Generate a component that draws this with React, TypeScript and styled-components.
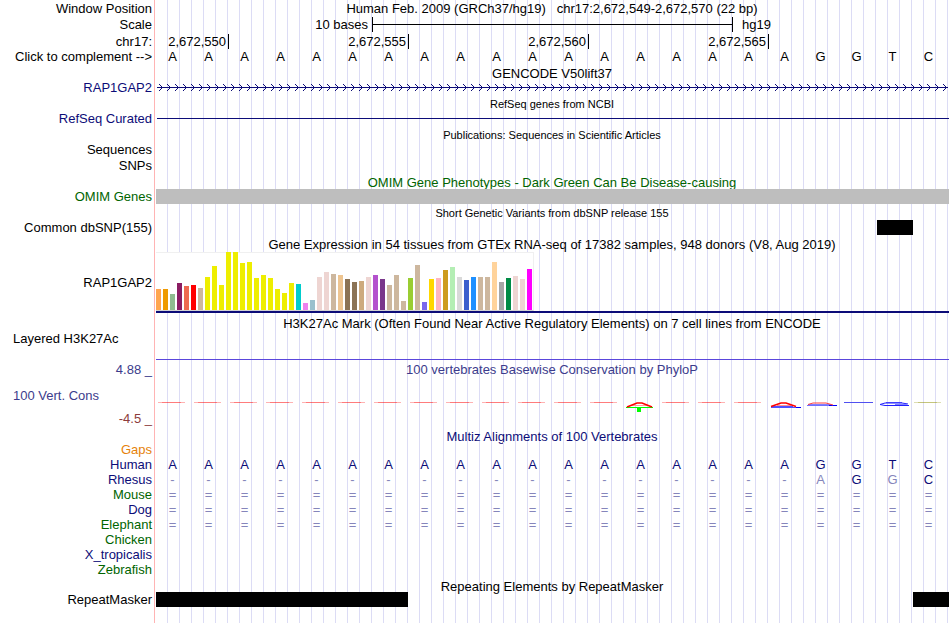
import React from 'react';
import styled, { createGlobalStyle } from 'styled-components';

const NAVY = '#0c0c78';
const GREEN = '#006400';
const SLATE = '#3c3c8c';

const GlobalStyle = createGlobalStyle`
  body {
    margin: 0;
    background: #fff;
    color: #000;
    font: 13px/15px "Liberation Sans", Arial, Helvetica, sans-serif;
  }
`;

const Browser = styled.main`
  padding-right: 1px;
  overflow: hidden;
`;

const Row = styled.section<{ $h: number }>`
  display: grid;
  grid-template-columns: 155px minmax(0, 1fr);
  column-gap: 1px;
  height: ${(p) => p.$h}px;
`;

const Label = styled.div<{ $color?: string; $align?: string; $left?: boolean }>`
  display: flex;
  box-sizing: border-box;
  align-items: ${(p) => p.$align ?? 'center'};
  justify-content: ${(p) => (p.$left ? 'flex-start' : 'flex-end')};
  padding: 0 2px 0 13px;
  border-right: 1px solid #ffb4b4;
  color: ${(p) => p.$color ?? '#000'};
  white-space: nowrap;
`;

const ComplementButton = styled.button`
  padding: 0;
  border: 0;
  background: none;
  color: inherit;
  font: inherit;
  cursor: pointer;
`;

const Plot = styled.div`
  display: grid;
  grid-template-columns: minmax(0, 1fr);
  padding-right: 1px;
  background-image: linear-gradient(to left, #dcdcf5 1px, transparent 1px);
  background-size: calc(100% / 66) 100%;
  background-origin: content-box;
`;

const Title = styled.h2<{ $color?: string; $small?: boolean; $lowered?: boolean }>`
  align-self: center;
  margin: 0;
  padding-top: ${(p) => (p.$lowered ? 2 : 0)}px;
  color: ${(p) => p.$color ?? '#000'};
  font-size: ${(p) => (p.$small ? 11 : 13)}px;
  font-weight: 400;
  text-align: center;
  white-space: pre;
`;

const ScaleBar = styled.div`
  display: grid;
  grid-template-columns: 6fr 10fr 6fr;
  align-items: center;
`;

const ScaleText = styled.span<{ $end?: boolean }>`
  padding: ${(p) => (p.$end ? '0 4px 0 0' : '0 0 0 10px')};
  text-align: ${(p) => (p.$end ? 'right' : 'left')};
`;

const ScaleLine = styled.div`
  display: flex;
  align-items: center;
  height: 15px;
  margin-right: -1px;
  border: solid #000;
  border-width: 0 1px;

  &::before {
    content: '';
    flex: 1;
    height: 1px;
    background: #000;
  }
`;

const Ruler = styled.div`
  display: grid;
  grid-template-columns: 2fr 5fr 5fr 5fr 5fr;
  margin: 1px -1px 0 1px;
`;

const Tick = styled.span`
  box-sizing: border-box;
  height: 15px;
  padding: 1px 2px 0 0;
  border-right: 1px solid #000;
  line-height: 14px;
  text-align: right;
`;

const Bases = styled.div`
  display: grid;
  grid-template-columns: repeat(22, 1fr);
  align-items: end;
`;

const Base = styled.span<{ $color?: string }>`
  padding-right: 3px;
  color: ${(p) => p.$color ?? '#000'};
  line-height: 14px;
  text-align: center;
`;

const Features = styled.div`
  display: grid;
  grid-template-columns: repeat(22, 1fr);
  margin-right: -1px;
`;

const Feature = styled.div<{ $from: number; $to: number; $color?: string }>`
  grid-column: ${(p) => p.$from} / ${(p) => p.$to};
  background: ${(p) => p.$color ?? '#000'};
`;

const Line = styled.div<{ $color: string; $align?: string; $inset?: boolean }>`
  align-self: ${(p) => p.$align ?? 'center'};
  height: 1px;
  margin: 0 -1px 0 ${(p) => (p.$inset ? 1 : 0)}px;
  background: ${(p) => p.$color};
`;

const Strand = styled.svg`
  display: block;
  width: 100%;
  height: 15px;
  overflow: hidden;
`;

const Expression = styled.div`
  display: flex;
  margin-right: -1px;
  border-bottom: 2px solid ${NAVY};
`;

const Bars = styled.div`
  display: flex;
  box-sizing: border-box;
  align-items: flex-end;
  gap: 2px;
  padding-right: 1px;
  border: solid #f0f0f0;
  border-width: 0 1px 1px 0;
  border-bottom-color: #d2d2d2;
  background: linear-gradient(#f0f0f0 1px, #fff 1px);
`;

const Bar = styled.div<{ $h: number; $color: string }>`
  width: 5px;
  height: ${(p) => p.$h}px;
  background: ${(p) => p.$color};
`;

const Logos = styled.div`
  display: grid;
  grid-template-columns: repeat(22, 1fr);
  align-items: start;
  padding-top: 22px;
`;

const Logo = styled.svg`
  display: block;
  width: 100%;
  height: 12px;
  overflow: visible;
`;

const TISSUES: [number, string][] = [
  [21, '#ffa54f'], [21, '#ee9a00'], [16, '#8fbc8f'], [27, '#8b1c62'], [24, '#ee6a50'],
  [25, '#ff0000'], [22, '#cdb79e'], [33, '#eeee00'], [44, '#eeee00'], [25, '#eeee00'],
  [58, '#eeee00'], [58, '#eeee00'], [47, '#eeee00'], [48, '#eeee00'], [32, '#eeee00'],
  [35, '#eeee00'], [32, '#eeee00'], [21, '#eeee00'], [17, '#eeee00'], [27, '#eeee00'],
  [26, '#00cdcd'], [7, '#ee82ee'], [10, '#9ac0cd'], [33, '#eed5d2'], [38, '#eed5d2'],
  [36, '#cdb79e'], [35, '#eec591'], [31, '#8b7355'], [28, '#8b7355'], [29, '#cdaa7d'],
  [33, '#eed5d2'], [35, '#b452cd'], [31, '#7a378b'], [25, '#cdb79e'], [35, '#cdb79e'],
  [9, '#cdb79e'], [32, '#9acd32'], [45, '#cdb79e'], [8, '#7a67ee'], [31, '#ffd700'],
  [32, '#ffb6c1'], [40, '#cd9b1d'], [43, '#b4eeb4'], [33, '#d9d9d9'], [30, '#3a5fcd'],
  [33, '#1e90ff'], [33, '#cdb79e'], [33, '#cdb79e'], [48, '#ffd39b'], [28, '#a6a6a6'],
  [32, '#008b45'], [34, '#eed5d2'], [31, '#eed5d2'], [41, '#ff00ff'],
];

const HUMAN = 'AAAAAAAAAAAAAAAAAAGGTC';
const SPECIES: { name: string; color: string; seq?: string }[] = [
  { name: 'Gaps', color: '#e6820a' },
  { name: 'Human', color: NAVY, seq: HUMAN },
  { name: 'Rhesus', color: NAVY, seq: '------------------AGGC' },
  { name: 'Mouse', color: GREEN, seq: '='.repeat(22) },
  { name: 'Dog', color: NAVY, seq: '='.repeat(22) },
  { name: 'Elephant', color: GREEN, seq: '='.repeat(22) },
  { name: 'Chicken', color: GREEN },
  { name: 'X_tropicalis', color: NAVY },
  { name: 'Zebrafish', color: GREEN },
];

function Sequence({ seq, reference }: { seq: string; reference?: string }) {
  return (
    <Bases>
      {[...seq].map((c, i) => (
        <Base key={i} $color={reference ? (c === reference[i] ? NAVY : '#8585bb') : undefined}>
          {c}
        </Base>
      ))}
    </Bases>
  );
}

function TitleRow({ h, color, small, children }: {
  h: number; color?: string; small?: boolean; children: string;
}) {
  return (
    <Row $h={h}>
      <Label />
      <Plot><Title $color={color} $small={small} $lowered>{children}</Title></Plot>
    </Row>
  );
}

function Dash({ color }: { color: string }) {
  return (
    <>
      <path d="M2 2.5H29" stroke={color} strokeOpacity=".3" />
      <path d="M6 2.5H25" stroke={color} strokeOpacity=".3" />
    </>
  );
}

function ConservationLogo({ index }: { index: number }) {
  let drawing = <Dash color="#ff0000" />;
  if (index === 13) {
    drawing = (
      <>
        <path d="M2 7.5H29" stroke="#00ff00" />
        <path d="M7 5.5H25" stroke="#ffa0a0" />
        <path d="M3 7L13 3H18L28 7" fill="none" stroke="#ff0000" strokeWidth="1.6" />
        <path d="M13 7H17V12H13Z" fill="#00ff00" />
      </>
    );
  } else if (index === 17) {
    drawing = (
      <>
        <path d="M3 6.5H25M3 7.5H32" stroke="#5050ff" />
        <path d="M28 7.5H33" stroke="#0000ff" />
        <path d="M9 5.5H23" stroke="#ff9090" />
        <path d="M3 6.5L13 3H18L28 6.5" fill="none" stroke="#ff0000" strokeWidth="1.6" />
      </>
    );
  } else if (index === 18) {
    drawing = (
      <>
        <path d="M4 4.5H27" stroke="#8080ff" />
        <path d="M3 5.5H32" stroke="#7070ff" />
        <path d="M25 5.5H33" stroke="#0000ff" />
        <path d="M4 4.5L9 3H22L29 5" fill="none" stroke="#ff4040" />
      </>
    );
  } else if (index === 19) {
    drawing = <path d="M4 2.5H33" stroke="#5050f0" />;
  } else if (index === 20) {
    drawing = (
      <>
        <path d="M10 2.5H26" stroke="#6060ff" />
        <path d="M32 4L26 3H9L4 4.5L9 5.5H33" fill="none" stroke="#2020ff" />
        <path d="M19 4.5H31" stroke="#8080ff" />
      </>
    );
  } else if (index === 21) {
    drawing = <Dash color="#909000" />;
  }
  return <Logo aria-hidden="true">{drawing}</Logo>;
}

export default function App() {
  return (
    <>
      <GlobalStyle />
      <Browser>
        <Row $h={16}>
          <Label>Window Position</Label>
          <Plot>
            <Title>{'Human Feb. 2009 (GRCh37/hg19)   chr17:2,672,549-2,672,570 (22 bp)'}</Title>
          </Plot>
        </Row>
        <Row $h={17}>
          <Label>Scale</Label>
          <Plot>
            <ScaleBar>
              <ScaleText $end>10 bases</ScaleText>
              <ScaleLine />
              <ScaleText>hg19</ScaleText>
            </ScaleBar>
          </Plot>
        </Row>
        <Row $h={16}>
          <Label $align="flex-end">chr17:</Label>
          <Plot>
            <Ruler>
              {['2,672,550', '2,672,555', '2,672,560', '2,672,565'].map((t) => (
                <Tick key={t}>{t}</Tick>
              ))}
            </Ruler>
          </Plot>
        </Row>
        <Row $h={15}>
          <Label><ComplementButton type="button">{'Click to complement -->'}</ComplementButton></Label>
          <Plot><Sequence seq={HUMAN} /></Plot>
        </Row>

        <TitleRow h={16}>GENCODE V50lift37</TitleRow>
        <Row $h={15}>
          <Label $color={NAVY}>RAP1GAP2</Label>
          <Plot>
            <Strand aria-hidden="true" shapeRendering="crispEdges">
              <defs>
                <pattern id="chevrons" width="8" height="15" patternUnits="userSpaceOnUse">
                  <path
                    d="M3 4h1v1h-1zM4 5h1v1h-1zM5 6h1v1h-1zM6 7h1v1h-1zM5 8h1v1h-1zM4 9h1v1h-1zM3 10h1v1h-1z"
                    fill={NAVY}
                  />
                </pattern>
              </defs>
              <rect x="1" y="7" width="100%" height="1" fill={NAVY} />
              <rect width="100%" height="15" fill="url(#chevrons)" />
            </Strand>
          </Plot>
        </Row>

        <TitleRow h={16} small>RefSeq genes from NCBI</TitleRow>
        <Row $h={15}>
          <Label $color={NAVY}>RefSeq Curated</Label>
          <Plot><Line $color={NAVY} $inset /></Plot>
        </Row>

        <TitleRow h={15} small>Publications: Sequences in Scientific Articles</TitleRow>
        <Row $h={16}><Label>Sequences</Label><Plot /></Row>
        <Row $h={16}><Label>SNPs</Label><Plot /></Row>

        <TitleRow h={16} color={GREEN}>OMIM Gene Phenotypes - Dark Green Can Be Disease-causing</TitleRow>
        <Row $h={15}>
          <Label $color={GREEN}>OMIM Genes</Label>
          <Plot><Features><Feature $from={1} $to={23} $color="#bebebe" /></Features></Plot>
        </Row>

        <TitleRow h={16} small>Short Genetic Variants from dbSNP release 155</TitleRow>
        <Row $h={15}>
          <Label>Common dbSNP(155)</Label>
          <Plot><Features><Feature $from={21} $to={22} /></Features></Plot>
        </Row>

        <TitleRow h={17}>
          Gene Expression in 54 tissues from GTEx RNA-seq of 17382 samples, 948 donors (V8, Aug 2019)
        </TitleRow>
        <Row $h={61}>
          <Label>RAP1GAP2</Label>
          <Plot>
            <Expression>
              <Bars>
                {TISSUES.map(([h, color], i) => <Bar key={i} $h={h} $color={color} />)}
              </Bars>
            </Expression>
          </Plot>
        </Row>

        <TitleRow h={18}>
          H3K27Ac Mark (Often Found Near Active Regulatory Elements) on 7 cell lines from ENCODE
        </TitleRow>
        <Row $h={29}>
          <Label $left $align="flex-start">Layered H3K27Ac</Label>
          <Plot><Line $color="#5a46dc" $align="end" /></Plot>
        </Row>

        <Row $h={18}>
          <Label $color={SLATE}>4.88 _</Label>
          <Plot><Title $color={SLATE}>100 vertebrates Basewise Conservation by PhyloP</Title></Plot>
        </Row>
        <Row $h={32}>
          <Label $left $color={SLATE}>100 Vert. Cons</Label>
          <Plot>
            <Logos>
              {[...HUMAN].map((_, i) => <ConservationLogo key={i} index={i} />)}
            </Logos>
          </Plot>
        </Row>
        <Row $h={17}><Label $color="#8c3c3c">-4.5 _</Label><Plot /></Row>

        <TitleRow h={15} color={NAVY}>Multiz Alignments of 100 Vertebrates</TitleRow>
        {SPECIES.map((s) => (
          <Row key={s.name} $h={15}>
            <Label $color={s.color}>{s.name}</Label>
            <Plot>{s.seq && <Sequence seq={s.seq} reference={HUMAN} />}</Plot>
          </Row>
        ))}

        <TitleRow h={15}>Repeating Elements by RepeatMasker</TitleRow>
        <Row $h={15}>
          <Label>RepeatMasker</Label>
          <Plot>
            <Features>
              <Feature $from={1} $to={8} />
              <Feature $from={22} $to={23} />
            </Features>
          </Plot>
        </Row>
        <Row $h={16}><Label /><Plot /></Row>
      </Browser>
    </>
  );
}
